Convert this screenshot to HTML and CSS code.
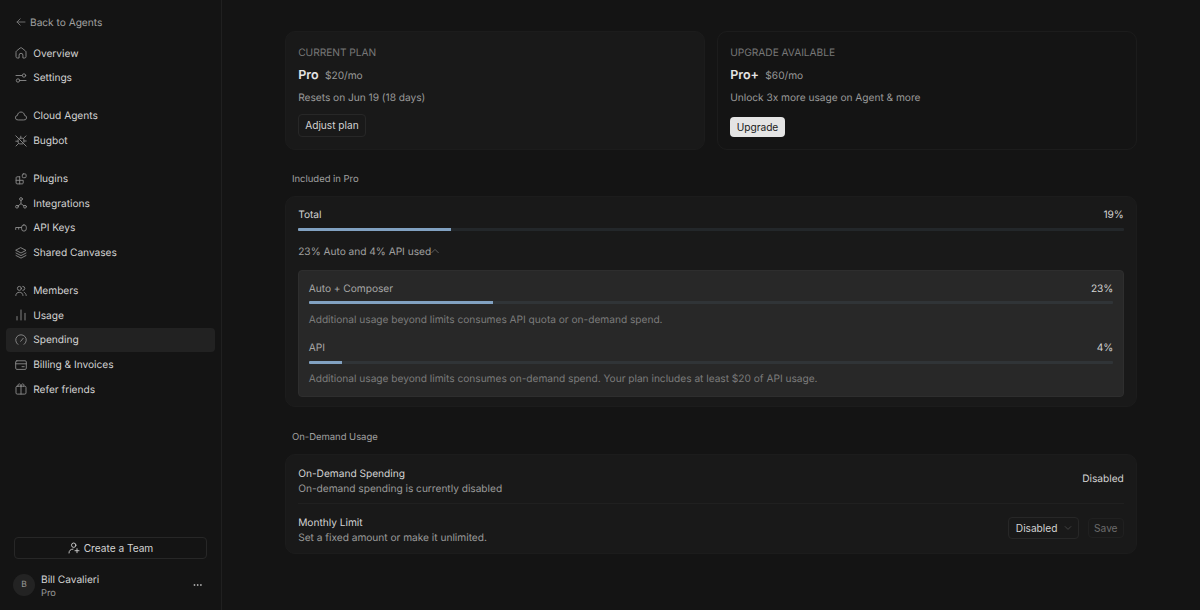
FILE: index.html
```html
<!DOCTYPE html>
<html lang="en">
<head>
    <meta charset="UTF-8">
    <meta name="viewport" content="width=device-width, initial-scale=1.0">
    <title>Spending</title>
    <link rel="stylesheet" href="styles.css">
</head>
<body>
    <div class="app">
        <aside class="sidebar">
            <a class="back">
                <svg class="back-icon" viewBox="0 0 10 10"><path d="M9 5H1M4.200 1.800 1 5l3.200 3.200"/></svg>
                Back to Agents
            </a>

            <nav class="nav">
                <div class="nav-group">
                    <a class="nav-item">
                        <svg class="icon" viewBox="0 0 12 12"><path d="M1 5.100c0-.5.2-.9.6-1.200L5.200 1a1.300 1.300 0 0 1 1.600 0l3.600 2.900c.4.3.6.7.6 1.200v4.600c0 .7-.5 1.300-1.300 1.300H7.900V8.200a1.900 1.900 0 0 0-3.800 0V11H2.300C1.500 11 1 10.400 1 9.700z"/></svg>
                        Overview
                    </a>
                    <a class="nav-item">
                        <svg class="icon" viewBox="0 0 12 12"><path d="M1 3.500h6M5.200 8.500H11"/><circle cx="9" cy="3.500" r="1.700"/><circle cx="3" cy="8.500" r="1.700"/></svg>
                        Settings
                    </a>
                </div>

                <div class="nav-group">
                    <a class="nav-item">
                        <svg class="icon" viewBox="0 0 12 12"><path d="M3 10a2.300 2.300 0 0 1-.5-4.600C2.600 3.400 4 2 6 2s3.400 1.400 3.500 3.400A2.300 2.300 0 0 1 9 10z"/></svg>
                        Cloud Agents
                    </a>
                    <a class="nav-item">
                        <svg class="icon" viewBox="0 0 12 12"><path d="M.8.8l10.400 10.400M4.600 3.200h2.600c1 0 1.700.7 1.700 1.700v2.300M7.600 8.900H5.200C4 8.900 3.100 8 3.100 6.800V4.800M8.300 3.600 11 .9M8.900 6h2.300M3.100 6.200H.8M3.600 8.400 1 11M5.800 3.200V1.200"/></svg>
                        Bugbot
                    </a>
                </div>

                <div class="nav-group">
                    <a class="nav-item">
                        <svg class="icon" viewBox="0 0 12 12"><path d="M4.700 3.800H2c-.5 0-.9.4-.9.900v5.300c0 .5.4.9.9.900h5.300c.5 0 .9-.4.9-.9V7.300H1.100M4.700 3.800v7.100"/><rect x="7.300" y=".9" width="3.800" height="3.800" rx="1"/></svg>
                        Plugins
                    </a>
                    <a class="nav-item">
                        <svg class="icon" viewBox="0 0 12 12"><circle cx="6" cy="2" r="1.400"/><circle cx="2" cy="9.700" r="1.400"/><circle cx="10" cy="9.700" r="1.400"/><path d="M6 3.400V6.700L3.100 8.800M6 6.700l2.900 2.100"/></svg>
                        Integrations
                    </a>
                    <a class="nav-item">
                        <svg class="icon" viewBox="0 0 12 12"><rect x="6.600" y="2.900" width="4.700" height="6.200" rx="2.300"/><path d="M6.600 5.500H.7v2M3.700 5.500v1.700"/></svg>
                        API Keys
                    </a>
                    <a class="nav-item">
                        <svg class="icon" viewBox="0 0 12 12"><path d="M6 .8 11 3.400 6 6 1 3.400zM1 6l5 2.600L11 6M1 8.500l5 2.600 5-2.600"/></svg>
                        Shared Canvases
                    </a>
                </div>

                <div class="nav-group">
                    <a class="nav-item">
                        <svg class="icon" viewBox="0 0 12 12"><circle cx="4.400" cy="3.400" r="2"/><path d="M.8 10.500C.9 8.400 2.300 7.300 4.400 7.300S7.900 8.400 8 10.500M7.800 1.400a2 2 0 0 1 0 4M9.200 7.400c1.200.5 1.900 1.500 2 3.100"/></svg>
                        Members
                    </a>
                    <a class="nav-item">
                        <svg class="icon" viewBox="0 0 12 12"><path d="M2 7.500V11M6 1v10M10 4.300V11"/></svg>
                        Usage
                    </a>
                    <a class="nav-item active">
                        <svg class="icon" viewBox="0 0 12 12"><path d="M2.900 10.400a5.300 5.300 0 1 1 6.200 0M5.700 7.300l2.500-3"/></svg>
                        Spending
                    </a>
                    <a class="nav-item">
                        <svg class="icon" viewBox="0 0 12 12"><rect x=".7" y="1.800" width="10.600" height="8.600" rx="1.200"/><path d="M.7 4.800h10.600M7 7.700h2.200"/></svg>
                        Billing &amp; Invoices
                    </a>
                    <a class="nav-item">
                        <svg class="icon" viewBox="0 0 12 12"><rect x="1" y="3.200" width="10" height="7.900" rx="1.200"/><path d="M6 3.200v7.900M6 3.200C5.800 1.700 5.100.9 4.200.9S2.700 2 3.200 3.200M6 3.200C6.200 1.700 6.900.9 7.800.9S9.300 2 8.800 3.200"/></svg>
                        Refer friends
                    </a>
                </div>
            </nav>

            <div class="sidebar-footer">
                <button class="team-button">
                    <svg class="team-icon" viewBox="0 0 12 12"><circle cx="5.700" cy="3.200" r="2.200"/><path d="M1 11c0-2.400 1.300-3.700 4-3.900M9 6.700v4M7 8.700h4"/></svg>
                    Create a Team
                </button>
                <div class="user">
                    <div class="avatar">B</div>
                    <div class="user-info">
                        <div class="user-name">Bill Cavalieri</div>
                        <div class="user-plan">Pro</div>
                    </div>
                    <svg class="more" viewBox="0 0 10 4"><circle cx="1.500" cy="2" r=".9"/><circle cx="4.700" cy="2" r=".9"/><circle cx="7.900" cy="2" r=".9"/></svg>
                </div>
            </div>
        </aside>

        <main class="main">
            <div class="plans">
                <section class="plan card">
                    <div class="plan-label">CURRENT PLAN</div>
                    <div class="plan-title"><span class="plan-name">Pro</span><span class="plan-price">$20/mo</span></div>
                    <div class="plan-text">Resets on Jun 19 (18 days)</div>
                    <button class="button">Adjust plan</button>
                </section>
                <section class="plan card outline">
                    <div class="plan-label">UPGRADE AVAILABLE</div>
                    <div class="plan-title"><span class="plan-name">Pro+</span><span class="plan-price">$60/mo</span></div>
                    <div class="plan-text">Unlock 3x more usage on Agent &amp; more</div>
                    <button class="button primary">Upgrade</button>
                </section>
            </div>

            <h2 class="section-title">Included in Pro</h2>
            <section class="card included">
                <div class="usage-row">
                    <span>Total</span>
                    <span>19%</span>
                </div>
                <div class="bar"><div class="bar-fill" style="width: 18.5%"></div></div>
                <div class="summary">
                    23% Auto and 4% API used
                    <svg class="caret" viewBox="0 0 8 8"><path d="M.7 5.700 4 2.400l3.300 3.300"/></svg>
                </div>

                <div class="breakdown">
                    <div class="usage">
                        <div class="usage-row">
                            <span class="usage-name">Auto + Composer</span>
                            <span>23%</span>
                        </div>
                        <div class="bar"><div class="bar-fill" style="width: 22.9%"></div></div>
                        <p class="usage-note">Additional usage beyond limits consumes API quota or on-demand spend.</p>
                    </div>
                    <div class="usage">
                        <div class="usage-row">
                            <span class="usage-name">API</span>
                            <span>4%</span>
                        </div>
                        <div class="bar"><div class="bar-fill" style="width: 4.1%"></div></div>
                        <p class="usage-note">Additional usage beyond limits consumes on-demand spend. Your plan includes at least $20 of API usage.</p>
                    </div>
                </div>
            </section>

            <h2 class="section-title">On-Demand Usage</h2>
            <section class="card on-demand">
                <div class="setting">
                    <div class="setting-info">
                        <div class="setting-name">On-Demand Spending</div>
                        <div class="setting-text">On-demand spending is currently disabled</div>
                    </div>
                    <span class="setting-value">Disabled</span>
                </div>
                <div class="setting">
                    <div class="setting-info">
                        <div class="setting-name">Monthly Limit</div>
                        <div class="setting-text">Set a fixed amount or make it unlimited.</div>
                    </div>
                    <div class="setting-controls">
                        <button class="select">
                            Disabled
                            <svg class="select-caret" viewBox="0 0 8 8"><path d="M1.200 2.600 4 5.400l2.800-2.800"/></svg>
                        </button>
                        <button class="save">Save</button>
                    </div>
                </div>
            </section>
        </main>
    </div>
</body>
</html>
```

FILE: styles.css
```css
* {
    margin: 0;
    padding: 0;
    box-sizing: border-box;
}

body {
    font-family: 'Inter', sans-serif;
    font-size: 10.2px;
    line-height: 15px;
    letter-spacing: -0.03px;
    text-rendering: geometricPrecision;
    background: #141414;
    color: #d2d2d2;
    height: 100vh;
    overflow: hidden;
}

button {
    font: inherit;
    letter-spacing: inherit;
    color: inherit;
    background: none;
    border: 1px solid #272727;
    border-radius: 4px;
    white-space: nowrap;
}

svg {
    fill: none;
    stroke: currentColor;
    stroke-width: 0.9;
    stroke-linecap: round;
    stroke-linejoin: round;
    flex-shrink: 0;
}

.app {
    display: flex;
    height: 100vh;
}

/* Sidebar */
.sidebar {
    width: 222px;
    flex-shrink: 0;
    border-right: 1px solid #202020;
    padding: 16px 6px 12px;
    display: flex;
    flex-direction: column;
}

.back {
    display: flex;
    align-items: center;
    gap: 4.5px;
    padding-left: 9.5px;
    color: #a0a0a0;
}

.back-icon {
    width: 10px;
    height: 10px;
    margin-bottom: 3px;
    color: #777;
}

.nav {
    display: flex;
    flex-direction: column;
    gap: 14.6px;
    margin-top: 10.6px;
}

.nav-group {
    display: flex;
    flex-direction: column;
    gap: 1px;
}

.nav-item {
    display: flex;
    align-items: center;
    gap: 6.7px;
    width: 209px;
    height: 23.6px;
    padding-top: 1.6px;
    padding-left: 8.5px;
    border-radius: 4px;
}

.nav-item.active {
    background: #222;
}

.icon {
    width: 12px;
    height: 12px;
    margin-bottom: 2px;
    color: #8c8c8c;
}

.sidebar-footer {
    margin-top: auto;
    padding: 0 8px 0 7px;
}

.team-button {
    display: flex;
    align-items: center;
    justify-content: center;
    gap: 4px;
    width: 193px;
    height: 22px;
    margin-left: 1px;
}

.team-icon {
    width: 12px;
    height: 12px;
}

.user {
    display: flex;
    align-items: center;
    height: 26px;
    margin-top: 13px;
}

.avatar {
    width: 22px;
    height: 22px;
    border-radius: 50%;
    background: #232323;
    color: #969696;
    font-size: 8.5px;
    line-height: 23px;
    text-align: center;
    margin-right: 6px;
}

.user-info {
    line-height: 13px;
    padding-top: 3px;
}

.user-plan {
    font-size: 9.3px;
    color: #999;
}

.more {
    width: 10px;
    height: 4px;
    margin-left: auto;
    margin-right: 4px;
    fill: #a8a8a8;
    stroke: none;
}

/* Main column */
.main {
    width: 852px;
    margin: 31px auto 0;
}

.card {
    background: #191919;
    border: 1px solid #1c1c1c;
    border-radius: 10px;
    padding: 0 12.2px;
}

.card.outline {
    background: none;
}

.plans {
    display: flex;
    gap: 12px;
}

.plan {
    flex: 1;
    height: 119px;
    padding-top: 13.5px;
    padding-bottom: 12.5px;
    display: flex;
    flex-direction: column;
    align-items: flex-start;
}

.plan-label {
    color: #777;
}

.plan-title {
    display: flex;
    align-items: baseline;
    gap: 6.5px;
    margin-top: 6.3px;
    line-height: 18px;
}

.plan-name {
    font-size: 12.5px;
    font-weight: 600;
    color: #e4e4e4;
}

.plan-price,
.plan-text {
    color: #999;
}

.plan-text {
    margin-top: 6px;
}

.button {
    height: 22.6px;
    line-height: 20px;
    padding: 0 6px;
    margin-top: auto;
}

.button.primary {
    height: 20px;
    line-height: 21px;
    background: #e4e4e4;
    border: none;
    color: #191919;
    padding: 0 6.5px;
}

.section-title {
    font-size: 9.5px;
    font-weight: 400;
    line-height: 14px;
    color: #a0a0a0;
    padding-left: 7px;
    margin: 23.3px 0 9.2px;
}

/* Usage bars */
.included {
    height: 211px;
    padding-top: 10.5px;
}

.usage-row {
    display: flex;
    justify-content: space-between;
}

.bar {
    height: 3px;
    background: #23272a;
    margin-top: 5px;
    border-radius: 1px;
    overflow: hidden;
}

.bar-fill {
    height: 100%;
    background: #81a1c1;
}

.summary {
    display: flex;
    align-items: center;
    margin-top: 13.7px;
    color: #a0a0a0;
}

.caret {
    width: 8px;
    height: 8px;
    margin-bottom: 3px;
    color: #666;
}

.breakdown {
    background: #282828;
    border: 1px solid #2e2e2e;
    border-radius: 4px;
    height: 127px;
    margin-top: 10.3px;
    padding: 11px 9.5px 0;
}

.breakdown .bar {
    background: #303437;
    margin-top: 4.5px;
}

.usage + .usage {
    margin-top: 13.5px;
}

.usage-name {
    color: #a6a6a6;
}

.usage-note {
    color: #7b7b7b;
    margin-top: 8.5px;
}

/* On-demand settings */
.on-demand {
    height: 100px;
}

.setting {
    display: flex;
    align-items: center;
    justify-content: space-between;
    height: 48.5px;
}

.setting + .setting {
    border-top: 1px solid #202020;
}

.setting-info {
    padding-top: 5.5px;
}

.setting-value {
    padding-top: 1.5px;
}

.setting-text {
    color: #999;
}

.setting-controls {
    display: flex;
    align-items: center;
    gap: 9px;
}

.select {
    display: flex;
    align-items: center;
    justify-content: space-between;
    width: 71px;
    height: 22px;
    padding: 0 6px 0 7px;
}

.select-caret {
    width: 8px;
    height: 8px;
    color: #484848;
}

.save {
    width: 36px;
    height: 20px;
    color: #6c6c6c;
    border-color: #202020;
}
```
